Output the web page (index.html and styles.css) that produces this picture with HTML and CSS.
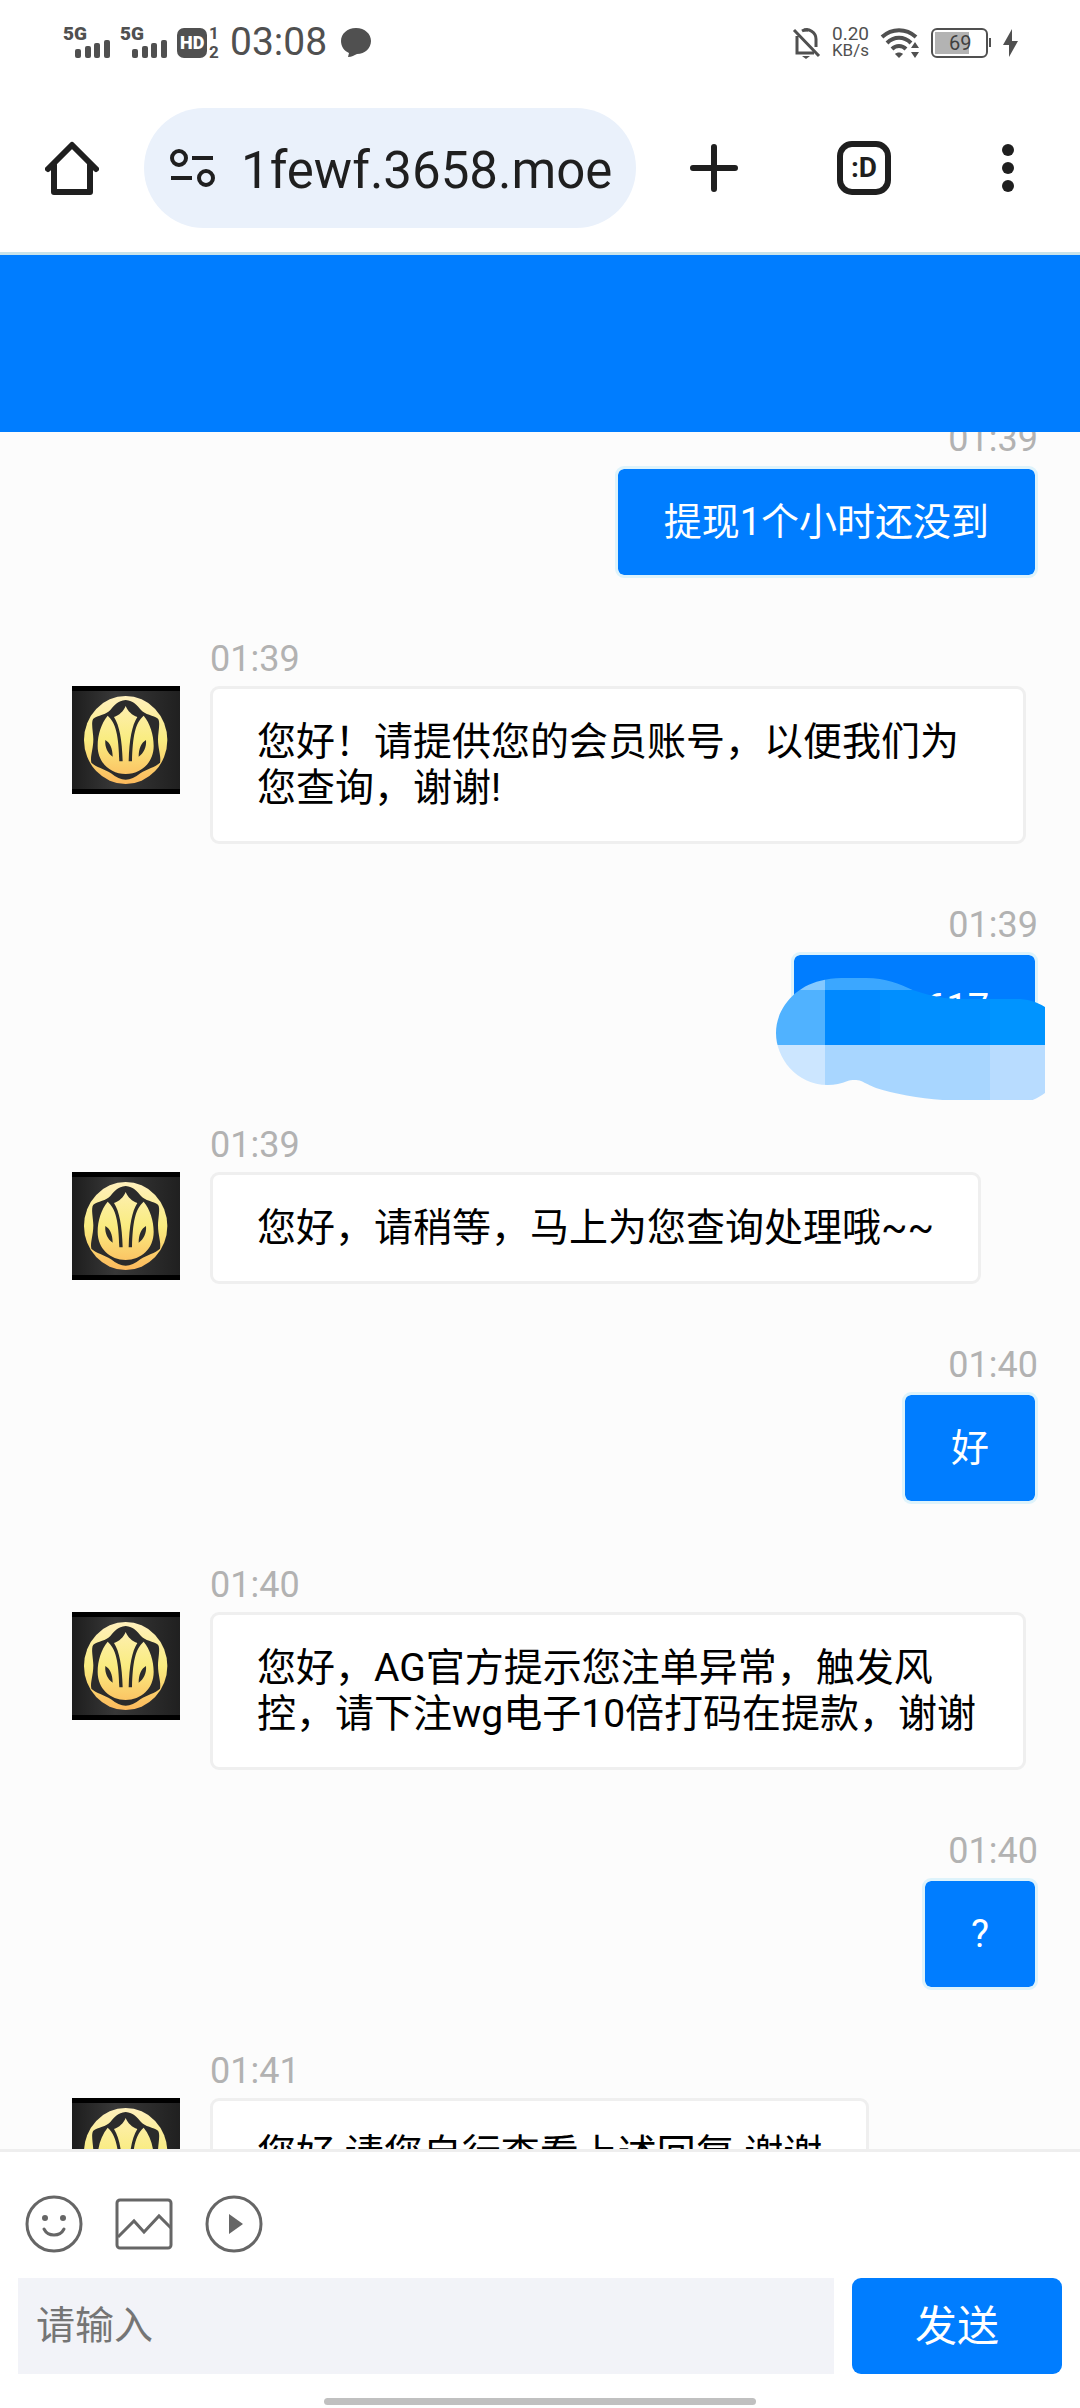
FILE: index.html
```html
<!DOCTYPE html>
<html lang="zh-CN">
<head>
  <meta charset="UTF-8" />
  <meta name="viewport" content="width=device-width, initial-scale=1.0" />
  <title>在线客服</title>
  <link rel="stylesheet" href="styles.css">
</head>
<body>
  <!-- shared shapes -->
  <svg class="defs" width="0" height="0" aria-hidden="true">
    <defs>
      <linearGradient id="gold" gradientUnits="userSpaceOnUse" x1="0" y1="30" x2="0" y2="294">
        <stop offset="0" stop-color="#fff0bd" />
        <stop offset="0.5" stop-color="#f9ec80" />
        <stop offset="1" stop-color="#fcb95c" />
      </linearGradient>
      <linearGradient id="dark" x1="0" y1="0" x2="1" y2="0">
        <stop offset="0" stop-color="#1d1d1d" />
        <stop offset="0.4" stop-color="#383838" />
        <stop offset="1" stop-color="#202020" />
      </linearGradient>
      <symbol id="logo" viewBox="0 0 324 324">
        <rect width="324" height="324" fill="#000" />
        <rect y="15" width="324" height="294" fill="url(#dark)" />
        <ellipse cx="161" cy="162" rx="125" ry="132" fill="url(#gold)" />
        <path fill="#2b2b2b" d="M161 42C185 44 195 58 207 72 218 86 245 88 258 98 266 108 258 140 258 160 258 190 268 210 264 230 250 244 225 248 205 262 190 274 175 281 161 281 147 281 132 274 117 262 97 248 72 244 58 230 54 210 64 190 64 160 64 140 56 108 64 98 77 88 104 86 115 72 127 58 137 44 161 42z" />
        <path fill="url(#gold)" d="M107 89C88 112 77 145 77 180 77 230 115 264 161 264 207 264 245 230 245 180 245 145 234 112 215 89 190 110 182 150 180 226H170C172 160 180 118 196 93 180 88 168 76 161 60 154 76 142 88 126 93 142 118 150 160 152 226H142C140 150 132 110 107 89z" />
        <path fill="#2b2b2b" d="M100 162c14 8 22 26 22 50-15-10-24-28-22-50zM222 162c-14 8-22 26-22 50 15-10 24-28 22-50z" />
      </symbol>
    </defs>
  </svg>

  <div class="status-bar">
    <div class="status-left">
      <svg width="47" height="44" viewBox="0 -5 47 44" fill="#505050">
        <text x="0" y="15" class="net">5G</text>
        <rect x="12" y="24" width="6" height="9" rx="2" /><rect x="22" y="21" width="6" height="12" rx="2" /><rect x="31" y="18" width="6" height="15" rx="2" /><rect x="41" y="15" width="6" height="18" rx="2" />
      </svg>
      <svg width="47" height="44" viewBox="0 -5 47 44" fill="#505050">
        <text x="0" y="15" class="net">5G</text>
        <rect x="12" y="24" width="6" height="9" rx="2" /><rect x="22" y="21" width="6" height="12" rx="2" /><rect x="31" y="18" width="6" height="15" rx="2" /><rect x="41" y="15" width="6" height="18" rx="2" />
      </svg>
      <svg width="43" height="44" viewBox="0 -5 43 44" fill="#505050">
        <rect y="3" width="30" height="30" rx="7" />
        <text x="3" y="24" class="hd">HD</text>
        <text x="32" y="14" class="sim">1</text>
        <text x="32" y="33" class="sim">2</text>
      </svg>
      <span class="clock">03:08</span>
      <svg class="chat-icon" width="30" height="34" viewBox="0 0 30 34" fill="#505050">
        <path d="M15 3c9 0 15 6 15 13s-6 13-14 13c-3 1-5 3-9 3l1-4C3 26 0 21 0 16 0 9 6 3 15 3z" />
      </svg>
    </div>
    <div class="status-right">
      <svg width="27" height="34" viewBox="0 0 27 34" fill="none" stroke="#505050" stroke-width="3">
        <path d="M1 5l25 26M4 11v17h17M9 6c7-4 14 2 14 8v8" />
        <path d="M9 31h8l-4 3z" fill="#505050" stroke="none" />
        <path d="M11 5h4" />
      </svg>
      <div class="speed"><span>0.20</span><span>KB/s</span></div>
      <svg width="38" height="34" viewBox="0 0 38 34" fill="none" stroke="#505050" stroke-width="4">
        <path d="M1 12c10-9 24-9 34 0M6 18c7-7 17-7 24 0M11 24c4-4 10-4 14 0" />
        <path d="M14 29c2-2 6-2 8 0l-4 4zM30 23l4-6 4 6zM30 27h8l-4 6z" fill="#505050" stroke="none" />
      </svg>
      <svg class="battery" width="60" height="34" viewBox="0 0 60 34">
        <rect x="1" y="4" width="55" height="28" rx="5" fill="#fff" stroke="#505050" stroke-width="2" />
        <path d="M4 7h34v22H4z" fill="#b3b3b3" />
        <path d="M58 13h2v9h-2z" fill="#505050" />
        <text x="18" y="25" class="level">69</text>
      </svg>
      <svg width="15" height="34" viewBox="0 0 15 34" fill="#505050">
        <path d="M9 4L0 20h6l0 12 9-16H9z" />
      </svg>
    </div>
  </div>

  <nav class="toolbar">
    <button class="tool" aria-label="Home">
      <svg width="54" height="54" viewBox="0 0 54 54" fill="none" stroke="#1f1f1f" stroke-width="6" stroke-linejoin="round" stroke-linecap="round">
        <path d="M3 28L27 4l24 24" /><path d="M9 24v27h36V24" />
      </svg>
    </button>
    <div class="address">
      <svg width="45" height="38" viewBox="0 0 45 38" fill="none" stroke="#1f1f1f" stroke-width="4">
        <circle cx="9" cy="9" r="7" /><path d="M22 9h21M1 29h21" /><circle cx="36" cy="29" r="7" />
      </svg>
      <input type="text" class="url" aria-label="Address" value="1fewf.3658.moe" />
    </div>
    <div class="actions">
      <button class="tool new-tab" aria-label="New tab">
        <svg width="54" height="54" viewBox="0 0 54 54" stroke="#1f1f1f" stroke-width="6" stroke-linecap="round">
          <path d="M27 6v42M6 27h42" />
        </svg>
      </button>
      <button class="tool tabs" aria-label="Tabs">:D</button>
      <button class="tool" aria-label="Menu">
        <svg width="54" height="54" viewBox="0 0 54 54" fill="#1f1f1f">
          <circle cx="27" cy="9" r="6" /><circle cx="27" cy="27" r="6" /><circle cx="27" cy="45" r="6" />
        </svg>
      </button>
    </div>
  </nav>

  <header class="banner"></header>

  <main class="chat">
    <div class="messages">
      <div class="message mine">
        <div class="time">01:39</div>
        <div class="bubble">提现1个小时还没到</div>
      </div>

      <div class="message agent">
        <svg class="avatar"><use href="#logo" /></svg>
        <div class="content">
          <div class="time">01:39</div>
          <div class="bubble">您好！请提供您的会员账号，以便我们为您查询，谢谢!</div>
        </div>
      </div>

      <div class="message mine">
        <div class="time">01:39</div>
        <div class="bubble account">617
          <!-- hides the account number -->
          <svg class="mosaic" width="269" height="122" viewBox="0 0 807 366" preserveAspectRatio="none">
            <clipPath id="smear">
              <path d="M0 165C0 90 60 20 147 5 170 0 190 0 212 0h58c60 0 100 18 140 36 60 20 100 27 150 27h160c35 0 60 8 87 24v258c-12 8-22 15-37 21H500c-70-4-150-20-200-36-20-8-30-14-45-21-10-4-30-4-40 0-20 8-38 12-60 12C60 320 0 240 0 165z" />
            </clipPath>
            <g clip-path="url(#smear)">
              <rect width="147" height="36" fill="#85c9ff" />
              <rect x="147" width="660" height="36" fill="#3ba7ff" />
              <rect y="36" width="147" height="165" fill="#50b2ff" />
              <rect x="147" y="36" width="165" height="165" fill="#0089ff" />
              <rect x="312" y="36" width="330" height="165" fill="#008fff" />
              <rect x="642" y="36" width="165" height="165" fill="#0094ff" />
              <rect y="201" width="147" height="165" fill="#cce6ff" />
              <rect x="147" y="201" width="495" height="165" fill="#a8d6ff" />
              <rect x="642" y="201" width="165" height="165" fill="#b8dcff" />
            </g>
          </svg>
        </div>
      </div>

      <div class="message agent">
        <svg class="avatar"><use href="#logo" /></svg>
        <div class="content">
          <div class="time">01:39</div>
          <div class="bubble">您好，请稍等，马上为您查询处理哦~~</div>
        </div>
      </div>

      <div class="message mine">
        <div class="time">01:40</div>
        <div class="bubble">好</div>
      </div>

      <div class="message agent">
        <svg class="avatar"><use href="#logo" /></svg>
        <div class="content">
          <div class="time">01:40</div>
          <div class="bubble">您好，AG官方提示您注单异常，触发风控，请下注wg电子10倍打码在提款，谢谢</div>
        </div>
      </div>

      <div class="message mine">
        <div class="time">01:40</div>
        <div class="bubble">?</div>
      </div>

      <div class="message agent">
        <svg class="avatar"><use href="#logo" /></svg>
        <div class="content">
          <div class="time">01:41</div>
          <div class="bubble">您好 请您自行查看上述回复 谢谢</div>
        </div>
      </div>
    </div>
  </main>

  <footer class="composer">
    <div class="tools">
      <button class="tool" aria-label="表情">
        <svg width="60" height="60" viewBox="0 0 60 60" fill="none" stroke="#666" stroke-width="3">
          <circle cx="30" cy="30" r="27" /><path d="M20 35c4 8 16 8 20 0" stroke-linecap="round" />
          <circle cx="21" cy="24" r="3" fill="#666" stroke="none" /><circle cx="39" cy="24" r="3" fill="#666" stroke="none" />
        </svg>
      </button>
      <button class="tool" aria-label="图片">
        <svg width="60" height="60" viewBox="0 0 60 60" fill="none" stroke="#666" stroke-width="3">
          <rect x="3" y="6" width="54" height="48" rx="3" /><path d="M4 43l16-16 10 11 15-16 12 12" />
        </svg>
      </button>
      <button class="tool" aria-label="视频">
        <svg width="60" height="60" viewBox="0 0 60 60" fill="none" stroke="#666" stroke-width="3">
          <circle cx="30" cy="30" r="27" /><path d="M25 20v20l14-10z" fill="#666" stroke="none" />
        </svg>
      </button>
    </div>
    <div class="entry">
      <input type="text" class="entry-field" placeholder="请输入" aria-label="请输入" />
      <button class="send">发送</button>
    </div>
    <div class="home-bar"></div>
  </footer>
</body>
</html>
```
FILE: styles.css
```css
* {
  box-sizing: border-box;
}
body {
  margin: 0;
  height: 100vh;
  display: flex;
  flex-direction: column;
  overflow: hidden;
  background-color: #fff;
  color: #000;
  font-family: Roboto, "Noto Sans CJK SC", sans-serif;
  font-size: 39px;
  line-height: 46px;
}
svg {
  display: block;
  flex: none;
}
button,
input {
  font-family: inherit;
  border: none;
  padding: 0;
}
.defs {
  position: absolute;
}

/* status bar */
.status-bar {
  flex: none;
  height: 84px;
  padding: 0 62px 0 63px;
  display: flex;
  justify-content: space-between;
  align-items: center;
  color: #505050;
}
.status-bar svg {
  overflow: visible;
}
.status-left,
.status-right {
  display: flex;
  align-items: center;
  gap: 10px;
}
.status-right {
  gap: 12px;
}
.net,
.hd,
.sim,
.level {
  line-height: 1;
}
.net {
  font-size: 19px;
  font-weight: 900;
}
.hd {
  font-size: 18px;
  font-weight: 900;
  fill: #fff;
}
.sim {
  font-size: 17px;
  font-weight: 700;
}
.clock {
  font-size: 39px;
}
.chat-icon {
  margin-left: 4px;
}
.speed {
  display: flex;
  flex-direction: column;
  align-items: flex-end;
  font-size: 19px;
  line-height: 17px;
}
.speed span:last-child {
  font-size: 17px;
}
.level {
  font-size: 20px;
  fill: #404040;
}

/* browser toolbar */
.toolbar {
  flex: none;
  padding: 24px 45px;
  display: flex;
  align-items: center;
  border-bottom: 3px solid #c9e3ea;
}
.tool {
  flex: none;
  background: none;
  color: #1f1f1f;
  cursor: pointer;
}
.address {
  flex: 1;
  min-width: 0;
  height: 120px;
  margin: 0 51px 0 45px;
  padding: 0 24px 0 26px;
  display: flex;
  align-items: center;
  gap: 26px;
  border-radius: 60px;
  background-color: #eaf1fb;
}
.url {
  flex: 1;
  min-width: 0;
  height: 64px;
  padding-top: 4px;
  background: none;
  color: #1f1f1f;
  font-size: 51px;
  outline: none;
}
.actions {
  display: flex;
  gap: 90px;
}
.new-tab {
  padding-right: 6px;
}
.tabs {
  width: 54px;
  height: 54px;
  border: 6px solid #1f1f1f;
  border-radius: 15px;
  font-size: 28px;
  font-weight: 700;
  line-height: 40px;
}

/* chat */
.banner {
  flex: none;
  height: 177px;
  background-color: #007dff;
}
.chat {
  flex: 1;
  min-height: 0;
  overflow: hidden;
  background-color: #fcfcfc;
}
.messages {
  margin-top: -16px;
  padding: 0 42px 0 72px;
  display: flex;
  flex-direction: column;
  gap: 58px;
}
.message {
  display: flex;
}
.mine {
  flex-direction: column;
  align-items: flex-end;
}
.agent {
  align-items: flex-start;
  gap: 30px;
  padding-right: 12px;
}
.avatar {
  width: 108px;
  height: 108px;
  margin-top: 50px;
}
.content {
  display: flex;
  flex-direction: column;
  align-items: flex-start;
}
.time {
  margin-bottom: 4px;
  color: #b2b2b2;
  font-size: 36px;
}
.bubble {
  padding: 30px 44px;
  border: 3px solid #efefef;
  border-radius: 9px;
  background-color: #fff;
}
.mine .bubble {
  position: relative;
  padding: 30px 46px;
  border-color: #def3fb;
  background-color: #007dff;
  background-clip: padding-box;
  color: #fff;
  font-size: 38px;
}
.mine .account {
  min-width: 247px;
  text-align: right;
}
.mosaic {
  position: absolute;
  top: 23px;
  right: -10px;
}

/* composer */
.composer {
  flex: none;
  padding: 42px 18px 3px;
  border-top: 3px solid #eee;
}
.tools {
  display: flex;
  gap: 30px;
  padding-left: 6px;
  margin-bottom: 24px;
}
.entry {
  display: flex;
  gap: 18px;
}
.entry-field {
  flex: 1;
  min-width: 0;
  height: 96px;
  padding: 0 18px;
  background-color: #f2f3f8;
  font-size: 39px;
}
.entry-field::placeholder {
  color: #757575;
}
.send {
  width: 210px;
  height: 96px;
  padding-bottom: 8px;
  border-radius: 9px;
  background-color: #007dff;
  color: #fff;
  font-size: 42px;
  cursor: pointer;
}
.home-bar {
  width: 432px;
  height: 7px;
  margin: 24px auto 0;
  border-radius: 4px;
  background-color: #c0c0c0;
}
```
